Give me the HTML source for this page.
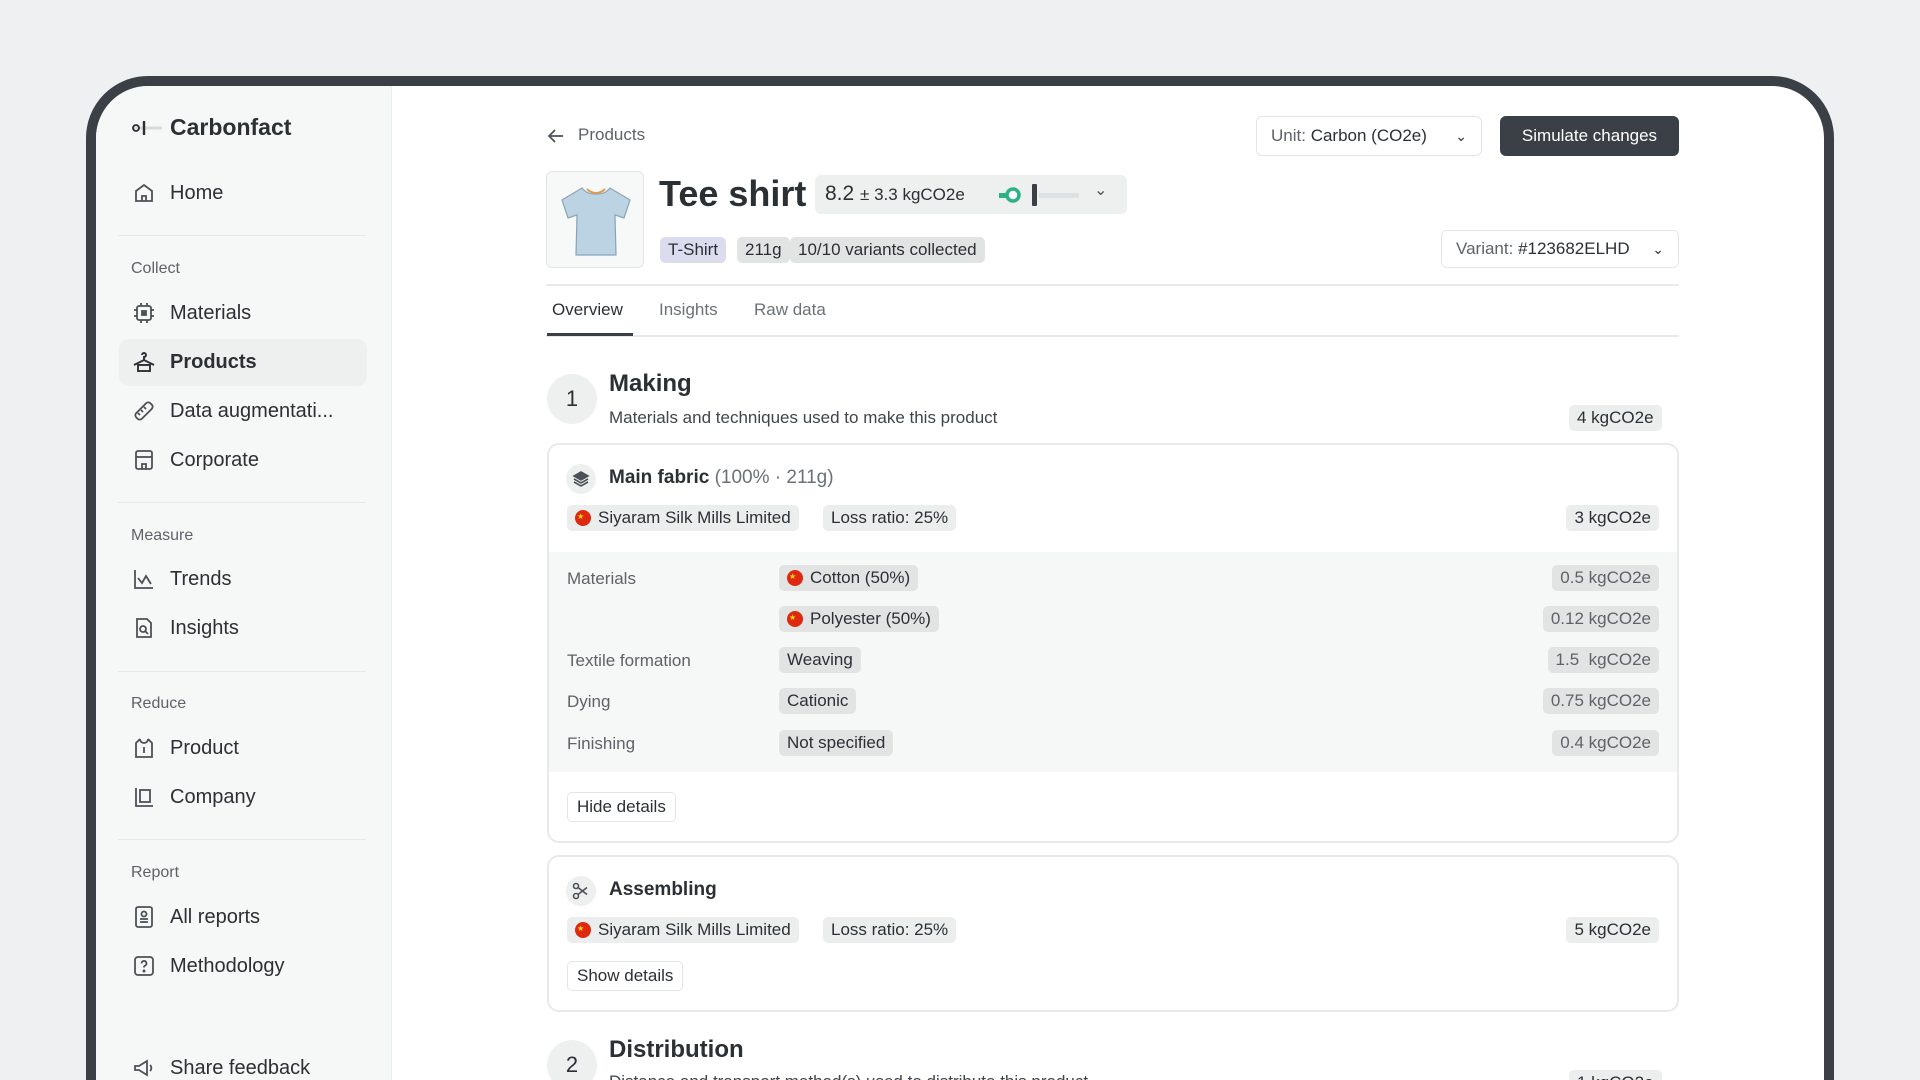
<!DOCTYPE html>
<html style="width:1920px;height:1080px;overflow:hidden"><head><meta charset="utf-8"><style>
*{box-sizing:border-box;margin:0;padding:0}
body{width:1920px;height:1080px;overflow:hidden;background:#eef0f1;font-family:"Liberation Sans",sans-serif;color:#2b3035;position:relative}
.frame{position:absolute;left:86px;top:76px;width:1748px;height:1100px;border:10px solid #3b4046;border-radius:62px;background:#fff;overflow:hidden}
.side{position:absolute;left:0;top:0;width:296px;height:100%;background:#f6f7f7;border-right:1px solid #eceeef}
.a{position:absolute;white-space:nowrap}
.nav{font-size:20px;color:#2b3035;height:24px;line-height:24px}
.lbl{font-size:16px;color:#5d6368}
.div{position:absolute;left:22px;width:248px;height:1px;background:#e6e8e9}
.ic{position:absolute;width:24px;height:24px}
.pill{position:absolute;height:26px;line-height:26px;border-radius:5px;background:#eceeee;font-size:17px;padding:0 8px;color:#2b3035;white-space:nowrap}
.g{background:#e2e4e4}
.flag{display:inline-block;width:16px;height:16px;border-radius:50%;background:#de2910;vertical-align:-3px;margin-right:7px;position:relative}
.flag:after{content:"★";position:absolute;left:2px;top:-6px;font-size:8px;color:#ffde00}
.card{position:absolute;left:547px;width:1132px;border:2px solid #e7e9ea;border-radius:12px;background:#fff;overflow:hidden}
.rowl{position:absolute;left:18px;font-size:17px;color:#5d6368}
.btn{position:absolute;height:30px;line-height:28px;border:1px solid #e3e5e6;border-radius:5px;padding:0 9px;font-size:17px;background:#fff}
</style></head><body>
<div class="frame">
 <div class="side">
  <div class="a" style="left:36px;top:28px;height:28px;width:30px">
   <svg width="30" height="28"><line x1="0" y1="14" x2="30" y2="14" stroke="#d5dadd" stroke-width="3"/><circle cx="4" cy="14" r="3" fill="none" stroke="#2b3035" stroke-width="1.8"/><line x1="12" y1="7" x2="12" y2="21" stroke="#2b3035" stroke-width="2.4"/></svg></div>
  <div class="a" style="left:74px;top:28px;font-size:23px;font-weight:bold;color:#2b3035">Carbonfact</div>

  <svg class="ic" style="left:36px;top:95px" viewBox="0 0 24 24" fill="none" stroke="#4b5157" stroke-width="1.8"><path d="M4 10l8-6 8 6v10H4z"/><path d="M10 20v-5h4v5"/></svg>
  <div class="a nav" style="left:74px;top:95px">Home</div>
  <div class="div" style="top:149px"></div>
  <div class="a lbl" style="left:35px;top:174px">Collect</div>
  <svg class="ic" style="left:36px;top:215px" viewBox="0 0 24 24" fill="none" stroke="#4b5157" stroke-width="1.8"><rect x="5" y="5" width="14" height="14" rx="2"/><rect x="10" y="10" width="4" height="4" fill="#4b5157"/><path d="M9 2v3M15 2v3M9 19v3M15 19v3M2 9h3M2 15h3M19 9h3M19 15h3"/></svg>
  <div class="a nav" style="left:74px;top:215px">Materials</div>
  <div class="a" style="left:23px;top:253px;width:248px;height:47px;background:#eeefef;border-radius:10px"></div>
  <svg class="ic" style="left:36px;top:264px" viewBox="0 0 24 24" fill="none" stroke="#2b3035" stroke-width="1.9"><path d="M10 5a2 2 0 1 1 2 2v3"/><path d="M2 15l10-5 10 5"/><rect x="6" y="15" width="12" height="6"/></svg>
  <div class="a nav" style="left:74px;top:264px;font-weight:bold">Products</div>
  <svg class="ic" style="left:36px;top:313px" viewBox="0 0 24 24" fill="none" stroke="#4b5157" stroke-width="1.8"><rect x="2" y="8" width="20" height="8" rx="3" transform="rotate(-45 12 12)"/><path d="M9 11l2 2M12 8l2 2M6 14l2 2"/></svg>
  <div class="a nav" style="left:74px;top:313px">Data augmentati...</div>
  <svg class="ic" style="left:36px;top:362px" viewBox="0 0 24 24" fill="none" stroke="#4b5157" stroke-width="1.8"><rect x="4" y="3" width="16" height="18" rx="2"/><path d="M4 9h16"/><path d="M10 21v-5h4v5"/></svg>
  <div class="a nav" style="left:74px;top:362px">Corporate</div>
  <div class="div" style="top:416px"></div>
  <div class="a lbl" style="left:35px;top:441px">Measure</div>
  <svg class="ic" style="left:36px;top:481px" viewBox="0 0 24 24" fill="none" stroke="#4b5157" stroke-width="1.8"><path d="M3 3v18h18"/><path d="M6 11l4 5 4-7 5 8"/></svg>
  <div class="a nav" style="left:74px;top:481px">Trends</div>
  <svg class="ic" style="left:36px;top:530px" viewBox="0 0 24 24" fill="none" stroke="#4b5157" stroke-width="1.8"><path d="M5 3h10l4 4v14H5z"/><circle cx="11" cy="13" r="3"/><path d="M13 15l3 3"/></svg>
  <div class="a nav" style="left:74px;top:530px">Insights</div>
  <div class="div" style="top:585px"></div>
  <div class="a lbl" style="left:35px;top:609px">Reduce</div>
  <svg class="ic" style="left:36px;top:650px" viewBox="0 0 24 24" fill="none" stroke="#4b5157" stroke-width="1.8"><path d="M8 3l-4 4v14h16V7l-4-4"/><path d="M8 3a4 4 0 0 0 8 0"/><path d="M12 11v6"/></svg>
  <div class="a nav" style="left:74px;top:650px">Product</div>
  <svg class="ic" style="left:36px;top:699px" viewBox="0 0 24 24" fill="none" stroke="#4b5157" stroke-width="1.8"><path d="M4 3v18h17"/><rect x="8" y="5" width="10" height="12"/></svg>
  <div class="a nav" style="left:74px;top:699px">Company</div>
  <div class="div" style="top:753px"></div>
  <div class="a lbl" style="left:35px;top:778px">Report</div>
  <svg class="ic" style="left:36px;top:819px" viewBox="0 0 24 24" fill="none" stroke="#4b5157" stroke-width="1.8"><rect x="4" y="2" width="16" height="20" rx="2"/><circle cx="12" cy="9" r="2.5"/><path d="M8 17h8M8 14h8"/></svg>
  <div class="a nav" style="left:74px;top:819px">All reports</div>
  <svg class="ic" style="left:36px;top:868px" viewBox="0 0 24 24" fill="none" stroke="#4b5157" stroke-width="1.8"><rect x="3" y="3" width="18" height="18" rx="3"/><path d="M9.5 9.5a2.5 2.5 0 1 1 3 2.4c-.5.2-.5.6-.5 1.6"/><circle cx="12" cy="17" r=".6" fill="#4b5157"/></svg>
  <div class="a nav" style="left:74px;top:868px">Methodology</div>
  <svg class="ic" style="left:36px;top:970px" viewBox="0 0 24 24" fill="none" stroke="#4b5157" stroke-width="1.8"><path d="M3 10v4h4l8 5V5L7 10z"/><path d="M18 9a4 4 0 0 1 0 6"/></svg>
  <div class="a nav" style="left:74px;top:970px">Share feedback</div>
 </div>
</div>

<svg class="a" style="left:546px;top:126px" width="20" height="20" viewBox="0 0 20 20" fill="none" stroke="#4b5157" stroke-width="1.7"><path d="M17 10H3M9 4l-6 6 6 6"/></svg>
<div class="a" style="left:578px;top:125px;font-size:17px;color:#5d6368">Products</div>
<div class="a" style="left:1256px;top:116px;width:226px;height:40px;border:1px solid #e3e5e6;border-radius:6px;font-size:17px;line-height:38px;padding-left:14px;color:#5d6368">Unit: <span style="color:#2b3035">Carbon (CO2e)</span><span style="position:absolute;right:14px;top:0;color:#2b3035;font-size:14px">&#8964;</span></div>
<div class="a" style="left:1500px;top:116px;width:179px;height:40px;background:#3b4046;border-radius:6px;color:#fff;font-size:17px;line-height:40px;text-align:center">Simulate changes</div>

<div class="a" style="left:546px;top:171px;width:98px;height:97px;border:1px solid #e3e5e6;border-radius:6px;background:#f7f8f8">
 <svg width="98" height="97" viewBox="0 0 98 97"><path d="M35 16l-20 12 6 18 9-3-1 40h40l-1-40 9 3 6-18-20-12c-4 5-8 6-14 6s-10-1-14-6z" fill="#bcd3e3" stroke="#8aa4b6" stroke-width="1.2"/><path d="M40 17c3 3 6 4 9 4s6-1 9-4" stroke="#d9a050" stroke-width="2" fill="none"/></svg>
</div>
<div class="a" style="left:659px;top:173px;font-size:36px;font-weight:bold;color:#2b3035">Tee shirt</div>
<div class="a" style="left:815px;top:175px;width:312px;height:39px;background:#eef0f0;border-radius:6px">
 <span class="a" style="left:10px;top:7px;font-size:21px">8.2 <span style="font-size:17px">± 3.3 kgCO2e</span></span>
 <svg class="a" style="left:184px;top:9px" width="80" height="22"><rect x="40" y="9" width="40" height="5" fill="#dde2e5"/><rect x="0" y="9" width="10" height="5" fill="#2bb384"/><circle cx="14" cy="11" r="6" fill="#fff" stroke="#2bb384" stroke-width="3.5"/><rect x="33" y="0" width="5" height="22" rx="1" fill="#3b4046"/></svg>
 <span class="a" style="left:279px;top:5px;font-size:16px;color:#4b5157">&#8964;</span>
</div>
<div class="pill" style="left:660px;top:237px;background:#dcdcef">T-Shirt</div>
<div class="pill g" style="left:737px;top:237px">211g</div>
<div class="pill g" style="left:790px;top:237px">10/10 variants collected</div>
<div class="a" style="left:1441px;top:230px;width:238px;height:38px;border:1px solid #e3e5e6;border-radius:6px;font-size:17px;line-height:36px;padding-left:14px;color:#5d6368">Variant: <span style="color:#2b3035">#123682ELHD</span><span style="position:absolute;right:14px;top:0;color:#2b3035;font-size:14px">&#8964;</span></div>
<div class="a" style="left:546px;top:284px;width:1133px;height:2px;background:#e7e9ea"></div>

<div class="a" style="left:552px;top:300px;font-size:17px;color:#2b3035">Overview</div>
<div class="a" style="left:659px;top:300px;font-size:17px;color:#6b7176">Insights</div>
<div class="a" style="left:754px;top:300px;font-size:17px;color:#6b7176">Raw data</div>
<div class="a" style="left:546px;top:335px;width:1133px;height:2px;background:#e7e9ea"></div>
<div class="a" style="left:547px;top:333px;width:86px;height:3px;background:#3b4046"></div>

<div class="a" style="left:547px;top:374px;width:50px;height:50px;border-radius:50%;background:#eef0f0;font-size:22px;line-height:50px;text-align:center">1</div>
<div class="a" style="left:609px;top:370px;font-size:24px;font-weight:bold">Making</div>
<div class="a" style="left:609px;top:408px;font-size:17px;color:#3f454a">Materials and techniques used to make this product</div>
<div class="pill" style="left:1569px;top:405px">4 kgCO2e</div>

<div class="card" style="top:443px;height:400px">
 <div class="a" style="left:17px;top:19px;width:30px;height:30px;border-radius:50%;background:#eef0f0"><svg width="30" height="30" viewBox="0 0 30 30" fill="none" stroke="#4b5157" stroke-width="1.6"><path d="M15 8l7 4-7 4-7-4z" fill="#4b5157"/><path d="M8 15l7 4 7-4M8 18l7 4 7-4"/></svg></div>
 <div class="a" style="left:60px;top:22px;font-size:19px;font-weight:bold">Main fabric <span style="font-weight:normal;color:#6b7176">(100% · 211g)</span></div>
 <div class="pill" style="left:18px;top:60px"><span class="flag"></span>Siyaram Silk Mills Limited</div>
 <div class="pill" style="left:274px;top:60px">Loss ratio: 25%</div>
 <div class="pill" style="right:18px;top:60px">3 kgCO2e</div>
 <div class="a" style="left:0;top:107px;width:1128px;height:220px;background:#f6f7f7">
  <div class="rowl" style="top:17px">Materials</div>
  <div class="pill g" style="left:230px;top:13px"><span class="flag"></span>Cotton (50%)</div>
  <div class="pill g" style="right:18px;top:13px;color:#5d6368">0.5 kgCO2e</div>
  <div class="pill g" style="left:230px;top:54px"><span class="flag"></span>Polyester (50%)</div>
  <div class="pill g" style="right:18px;top:54px;color:#5d6368">0.12 kgCO2e</div>
  <div class="rowl" style="top:99px">Textile formation</div>
  <div class="pill g" style="left:230px;top:95px">Weaving</div>
  <div class="pill g" style="right:18px;top:95px;color:#5d6368">1.5&nbsp; kgCO2e</div>
  <div class="rowl" style="top:140px">Dying</div>
  <div class="pill g" style="left:230px;top:136px">Cationic</div>
  <div class="pill g" style="right:18px;top:136px;color:#5d6368">0.75 kgCO2e</div>
  <div class="rowl" style="top:182px">Finishing</div>
  <div class="pill g" style="left:230px;top:178px">Not specified</div>
  <div class="pill g" style="right:18px;top:178px;color:#5d6368">0.4 kgCO2e</div>
 </div>
 <div class="btn" style="left:18px;top:347px">Hide details</div>
</div>

<div class="card" style="top:855px;height:157px">
 <div class="a" style="left:17px;top:19px;width:30px;height:30px;border-radius:50%;background:#eef0f0"><svg width="30" height="30" viewBox="0 0 30 30" fill="none" stroke="#4b5157" stroke-width="1.6"><circle cx="10" cy="10" r="2.5"/><circle cx="10" cy="20" r="2.5"/><path d="M12 11.5l9 7M12 18.5l9-7"/></svg></div>
 <div class="a" style="left:60px;top:22px;font-size:19px;font-weight:bold">Assembling</div>
 <div class="pill" style="left:18px;top:60px"><span class="flag"></span>Siyaram Silk Mills Limited</div>
 <div class="pill" style="left:274px;top:60px">Loss ratio: 25%</div>
 <div class="pill" style="right:18px;top:60px">5 kgCO2e</div>
 <div class="btn" style="left:18px;top:104px">Show details</div>
</div>

<div class="a" style="left:547px;top:1040px;width:50px;height:50px;border-radius:50%;background:#eef0f0;font-size:22px;line-height:50px;text-align:center">2</div>
<div class="a" style="left:609px;top:1036px;font-size:24px;font-weight:bold">Distribution</div>
<div class="a" style="left:609px;top:1072px;font-size:17px;color:#3f454a">Distance and transport method(s) used to distribute this product</div>
<div class="pill" style="left:1569px;top:1070px">1 kgCO2e</div>
</body></html>
